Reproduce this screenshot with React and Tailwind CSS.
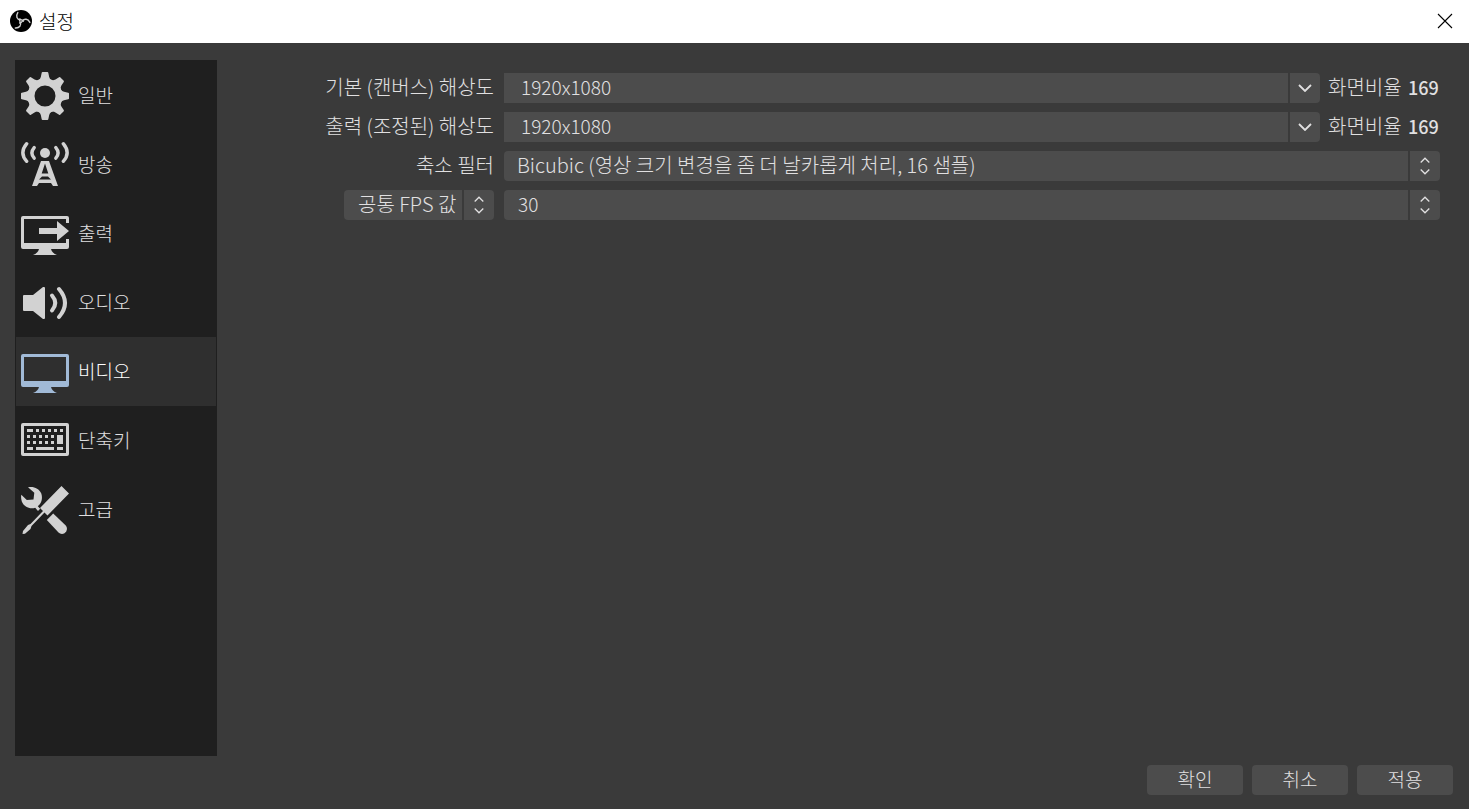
import { useState } from 'react'

function Logo() {
  return (
    <svg viewBox="0 0 22 22" className="size-[22px] shrink-0">
      <circle cx="11" cy="11" r="11" fill="#000" />
      <g fill="none" stroke="#d0d0d0" strokeWidth="1.4" strokeLinecap="round">
        {[0, 120, 240].map((angle) => (
          <path
            key={angle}
            d="M7.800 2.600C5.600 6 6.800 9.600 10.600 9.800Q12.400 9.600 13.400 11.200"
            transform={`rotate(${angle} 11 11)`}
          />
        ))}
      </g>
    </svg>
  )
}

function GearIcon() {
  return (
    <svg viewBox="0 0 48 48" className="size-12 shrink-0" fill="currentColor">
      <circle cx="24" cy="24" r="14" fill="none" stroke="currentColor" strokeWidth="7" />
      {[0, 45, 90, 135, 180, 225, 270, 315].map((angle) => (
        <path
          key={angle}
          d="M21.500 0h5q.6 0 .8.8l.9 4.200q.4 1.800 2.300 3.400l-2 2H19.500l-2-2q1.900-1.600 2.300-3.400l.9-4.200q.2-.8.8-.8z"
          transform={`rotate(${angle} 24 24)`}
        />
      ))}
    </svg>
  )
}

function BroadcastIcon() {
  return (
    <svg viewBox="0 0 48 48" className="size-12 shrink-0" fill="currentColor">
      <circle cx="24" cy="12" r="5" />
      <g fill="none" stroke="currentColor" strokeWidth="3.4" strokeLinecap="round">
        <path d="M5.700 2.700Q-2 12 5.700 20.300" />
        <path d="M42.300 2.700Q50 12 42.300 20.300" />
        <path d="M13.200 6.600Q8.600 12 13.200 17.200" />
        <path d="M34.800 6.600Q39.400 12 34.800 17.200" />
      </g>
      <path
        fillRule="evenodd"
        d="M20 20h8l9 25h-5l-2-3H18l-2 3h-5zM24 22.500l-3.300 10h6.600zM21 35.500l-3 3h12l-3-3z"
      />
    </svg>
  )
}

function OutputIcon() {
  return (
    <svg viewBox="0 0 48 48" className="size-12 shrink-0" fill="currentColor">
      <path d="M2 6h44q2 0 2 2v5h-3V9H3v24h42v-4h3v8q0 2-2 2H30q1 4 6 6H12q5-2 6-6H2q-2 0-2-2V8q0-2 2-2z" />
      <path d="M18 18h18v-7l12 10-12 10v-7H18z" />
    </svg>
  )
}

function AudioIcon() {
  return (
    <svg viewBox="0 0 48 48" className="size-12 shrink-0" fill="currentColor">
      <path d="M3 16h9l10-8h1q1 0 1 1v30q0 1-1 1h-1l-10-8H3q-1 0-1-1V17q0-1 1-1z" />
      <g fill="none" stroke="currentColor" strokeWidth="4" strokeLinecap="round">
        <path d="M31 16.500Q37.500 24 31 31.500" />
        <path d="M38 10Q50 24 38 38" />
      </g>
    </svg>
  )
}

function VideoIcon() {
  return (
    <svg viewBox="0 0 48 48" className="size-12 shrink-0" fill="currentColor">
      <path
        fillRule="evenodd"
        d="M2 6h44q2 0 2 2v29q0 2-2 2H30q1 4 6 6H12q5-2 6-6H2q-2 0-2-2V8q0-2 2-2zM3 9v24h42V9z"
      />
    </svg>
  )
}

function KeyboardIcon() {
  return (
    <svg viewBox="0 0 48 48" className="size-12 shrink-0" fill="currentColor">
      <path
        fillRule="evenodd"
        d="M2 6h44q2 0 2 2v29q0 2-2 2H2q-2 0-2-2V8q0-2 2-2zM3 9v27h42V9z"
      />
      <path d="M6 12h6v3H6zM15 12h3v3h-3zM21 12h3v3h-3zM27 12h3v3h-3zM33 12h3v3h-3zM39 12h3v3h-3z" />
      <path d="M6 18h3v3H6zM12 18h3v3h-3zM18 18h3v3h-3zM24 18h3v3h-3zM30 18h3v3h-3zM36 18h6v9h-6z" />
      <path d="M6 24h3v3H6zM12 24h3v3h-3zM18 24h3v3h-3zM24 24h3v3h-3zM30 24h3v3h-3z" />
      <path d="M6 30h6v3H6zM15 30h18v3H15zM36 30h6v3h-6z" />
    </svg>
  )
}

function ToolsIcon() {
  return (
    <svg viewBox="0 0 48 48" className="size-12 shrink-0" fill="currentColor">
      {/* Wrench */}
      <path d="M7 1.300C12 0 18 2 20.300 7.500C21.500 11 21 15 19 18L16.800 20.200L19.200 22.800L17 25L14.200 21.800C9 23.500 3 21 .8 15.500Q-.3 12 .3 8.800L5.800 14L12.500 13.500L13.300 6.800z" />
      <path d="M32.200 27.500L44.500 39.200C47 42 46 45.500 43.500 47.200C41.500 48.500 39 48 37.500 46.500L25.800 34z" />
      {/* Screwdriver */}
      <path d="M40.500 0L48 7.500L26.500 29.500L23.500 26.500L10.500 40L9.500 43L4 47.700L1.500 48L2 45L7 39L9.500 38L22 25L19 22z" />
    </svg>
  )
}

const sections = [
  { id: 'general', label: '일반', Icon: GearIcon },
  { id: 'stream', label: '방송', Icon: BroadcastIcon },
  { id: 'output', label: '출력', Icon: OutputIcon },
  { id: 'audio', label: '오디오', Icon: AudioIcon },
  { id: 'video', label: '비디오', Icon: VideoIcon },
  { id: 'hotkeys', label: '단축키', Icon: KeyboardIcon },
  { id: 'advanced', label: '고급', Icon: ToolsIcon },
]

function ResolutionRow({ id, label }) {
  const [value, setValue] = useState('1920x1080')

  return (
    <>
      <label htmlFor={id} className="pb-0.5 text-right">{label}</label>
      <div className="flex items-center">
        <div className="flex h-[30px] grow gap-0.5">
          <input
            id={id}
            type="text"
            value={value}
            onChange={(e) => setValue(e.target.value)}
            className="min-w-0 grow bg-[#4c4c4c] px-[17px] pb-0.5 text-[19px] outline-none"
          />
          <button
            type="button"
            aria-label="해상도 목록"
            className="flex w-[30px] items-center justify-center rounded-r bg-[#4c4c4c]"
          >
            <svg viewBox="0 0 14 8" className="h-2 w-3.5" fill="none" stroke="currentColor" strokeWidth="1.8">
              <path d="M1 1l6 6 6-6" />
            </svg>
          </button>
        </div>
        <span className="w-[120px] shrink-0 pb-0.5 pl-2 whitespace-nowrap">
          화면비율 <b className="pl-0.5 text-[18px] font-medium">169</b>
        </span>
      </div>
    </>
  )
}

function SpinSelect({ options, className, ...props }) {
  return (
    <div className="relative h-[30px]">
      <select
        {...props}
        className={`h-full w-full appearance-none rounded bg-[#4c4c4c] pb-0.5 outline-none ${className}`}
      >
        {options.map((option) => (
          <option key={option}>{option}</option>
        ))}
      </select>
      <span className="pointer-events-none absolute inset-y-0 right-0 flex w-8 items-center justify-center border-l-2 border-[#3a3a3a]">
        <svg viewBox="0 0 10 18" className="h-[18px] w-2.5" fill="none" stroke="currentColor" strokeWidth="1.3">
          <path d="M.7 5.500L5 1.200l4.300 4.300M.7 12.500L5 16.800l4.300-4.300" />
        </svg>
      </span>
    </div>
  )
}

export default function App() {
  const [active, setActive] = useState('video')

  return (
    <div className="flex min-h-screen flex-col bg-[#3a3a3a] font-['Noto_Sans_CJK_KR',sans-serif] text-[19px] font-light text-[#e1e0e1]">
      <header className="flex h-[43px] items-center justify-between bg-white pr-4 pb-0.5 pl-[10px] text-black">
        <div className="flex items-center gap-[7px]">
          <Logo />
          <h1 className="leading-6">설정</h1>
        </div>
        <button type="button" aria-label="닫기">
          <svg viewBox="0 0 16 16" className="size-4" fill="none" stroke="currentColor" strokeWidth="1.1">
            <path d="M1 1l14 14M15 1L1 15" />
          </svg>
        </button>
      </header>

      <div className="flex grow gap-4 pt-[17px] pr-[29px] pl-[15px]">
        <nav className="flex w-[202px] shrink-0 flex-col bg-[#1f1f1f] p-px">
          {sections.map(({ id, label, Icon }) => (
            <button
              key={id}
              type="button"
              onClick={() => setActive(id)}
              className={`flex h-[69px] items-center gap-[9px] pt-px pl-[5px] ${active === id ? 'bg-[#2f2f2f] text-white' : ''}`}
            >
              <span className={active === id ? 'text-[#a1bad7]' : 'text-[#d2d2d2]'}>
                <Icon />
              </span>
              <span className="pb-0.5">{label}</span>
            </button>
          ))}
        </nav>

        <main className="grow pt-[13px]">
          <div className="grid grid-cols-[261px_1fr] items-center gap-x-[10px] gap-y-[9px] text-[20px] leading-7">
            <ResolutionRow id="base-resolution" label="기본 (캔버스) 해상도" />
            <ResolutionRow id="output-resolution" label="출력 (조정된) 해상도" />

            <label htmlFor="filter" className="pb-0.5 text-right">축소 필터</label>
            <SpinSelect
              id="filter"
              className="pr-10 pl-[13px]"
              options={['Bicubic (영상 크기 변경을 좀 더 날카롭게 처리, 16 샘플)']}
            />

            <div className="w-[150px] justify-self-end">
              <SpinSelect
                aria-label="FPS 유형"
                className="pr-8 pl-[14px]"
                options={['공통 FPS 값', '정수 FPS 값', '분수 FPS 값']}
              />
            </div>
            <SpinSelect
              aria-label="공통 FPS 값"
              className="pr-10 pl-[14px] text-[19px]"
              defaultValue="30"
              options={['24', '30', '48', '60']}
            />
          </div>
        </main>
      </div>

      <footer className="flex justify-end gap-[9px] pt-[9px] pr-4 pb-[14px]">
        {['확인', '취소', '적용'].map((text) => (
          <button
            key={text}
            type="button"
            className="h-[30px] w-24 rounded bg-[#4c4c4c] pb-0.5 leading-7"
          >
            {text}
          </button>
        ))}
      </footer>
    </div>
  )
}
